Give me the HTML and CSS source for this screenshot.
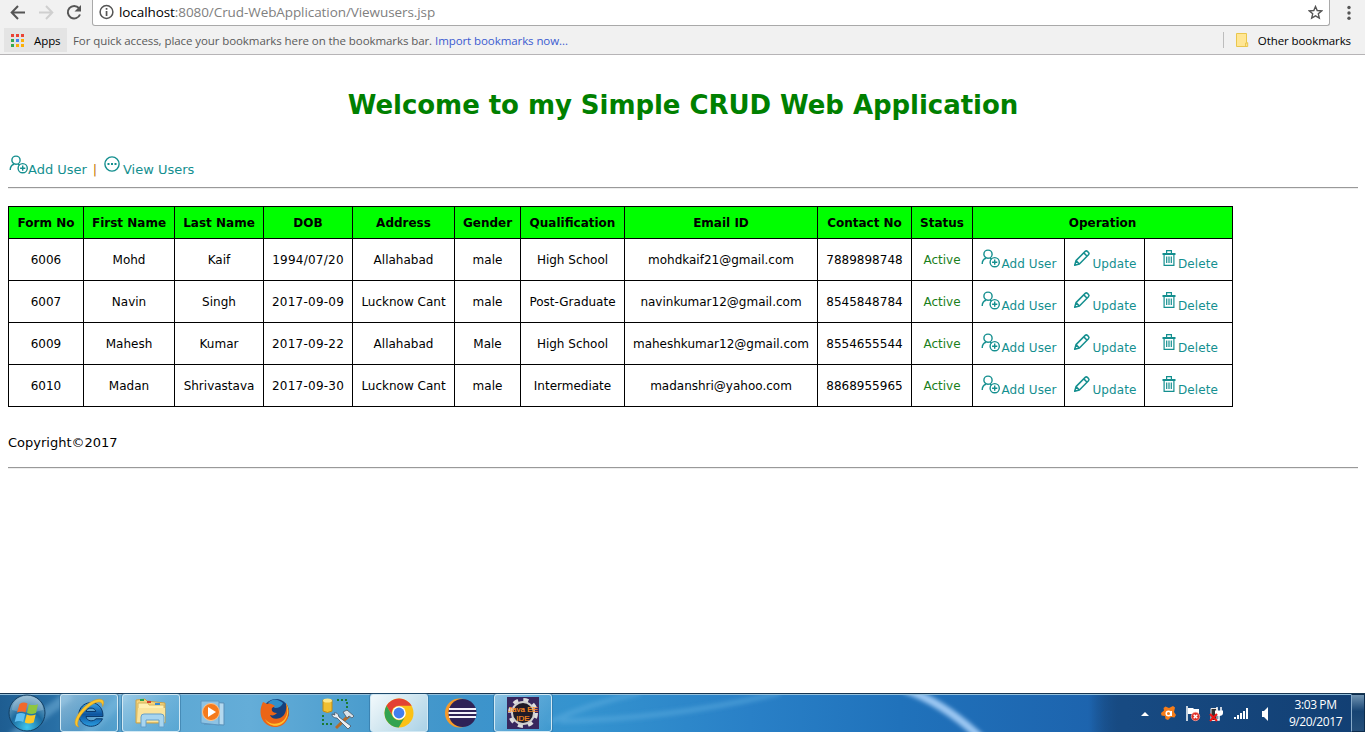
FILE: index.html
```html
<!DOCTYPE html>
<html lang="en">
<head>
<meta charset="utf-8">
<title>Viewusers.jsp</title>
<link rel="stylesheet" href="styles.css">
</head>
<body>
<svg class="defs" width="0" height="0" aria-hidden="true">
  <defs>
    <symbol id="add-user" viewBox="0 0 20 20">
      <g fill="none" stroke="#148f8f" stroke-width="1.4"><circle cx="7" cy="5.2" r="4.1"/><path d="M1.2 15C1.2 11.5 3 9.7 5.2 9.2M8.7 9.2l2 1"/><circle cx="13.7" cy="13.2" r="4.6"/><path d="M13.7 10.6v5.2M11.1 13.2h5.2"/></g>
    </symbol>
    <symbol id="pencil" viewBox="0 0 18 18">
      <g fill="none" stroke="#148f8f" stroke-width="1.5" stroke-linejoin="round"><path d="M1.7 16.3L3 11.6 12.2 2.4a1.6 1.6 0 0 1 2.2 0l1.1 1.1a1.6 1.6 0 0 1 0 2.2L6.4 15zM3 11.6L6.4 15M10.8 3.9l3.300 3.300"/></g>
    </symbol>
    <symbol id="trash" viewBox="0 0 14 17">
      <path fill="#148f8f" d="M4 0h6v3h3.500v2H.5V3H4zM5.200 1.200V3h3.600V1.200z" fill-rule="evenodd"/><path fill="none" stroke="#148f8f" stroke-width="1.2" d="M2.100 4.500v10.800h9.800V4.500M4.700 6.500v6.500M7 6.500v6.500M9.300 6.500v6.500"/>
    </symbol>
  </defs>
</svg>

<header class="browser">
  <div class="toolbar">
    <svg class="nav" width="92" height="26" viewBox="0 0 92 26"><g fill="none" stroke-width="2"><path stroke="#555" d="M25 12.5H12M18 6l-6.3 6.5L18 19"/><path stroke="#cfcfcf" d="M39 12.5h13M46 6l6.3 6.5L46 19"/><path stroke="#555" d="M79 8.2A6.3 6.3 0 1 0 80 14.5"/></g><path fill="#555" d="M81 5v6.5h-6.5z"/></svg>
    <div class="address">
      <svg width="15" height="16" viewBox="0 0 15 16"><circle cx="7.5" cy="8" r="6.4" fill="none" stroke="#555" stroke-width="1.5"/><path fill="#555" d="M6.7 4h1.7v1.8H6.7zM6.7 7h1.7v5H6.7z"/></svg>
      <span class="url"><b>localhost</b>:8080/Crud-WebApplication/Viewusers.jsp</span>
      <svg class="star" width="15" height="15" viewBox="0 0 15 15"><path fill="none" stroke="#555" stroke-width="1.4" d="M7.5 1.5l1.7 4 4.5.4-3.4 2.9 1 4.3-3.8-2.3-3.8 2.3 1-4.3L1.3 5.9l4.5-.4z"/></svg>
    </div>
    <svg class="dots" width="6" height="18" viewBox="0 0 6 18"><g fill="#555"><circle cx="3" cy="3.5" r="1.7"/><circle cx="3" cy="9" r="1.7"/><circle cx="3" cy="14.2" r="1.7"/></g></svg>
  </div>
  <div class="bookmarks">
    <div class="apps">
      <svg width="13" height="13" viewBox="0 0 13 13"><path fill="#ea4335" d="M0 0h3v3H0zM5 0h3v3H5zM10 0h3v3h-3z"/><path fill="#34a853" d="M0 5h3v3H0zM0 10h3v3H0z"/><path fill="#4285f4" d="M5 5h3v3H5z"/><path fill="#fbaf05" d="M10 5h3v3h-3zM5 10h3v3H5zM10 10h3v3h-3z"/></svg>
      <span>Apps</span>
    </div>
    <span class="hint">For quick access, place your bookmarks here on the bookmarks bar.</span>
    <a class="import">Import bookmarks now...</a>
    <div class="other">
      <svg width="13" height="14" viewBox="0 0 13 14"><path fill="#ffe694" stroke="#e9c64d" d="M.5.5h10v9.2h1.2v3.8H.5zM9.6 13.3V10h1.4"/></svg>
      <span>Other bookmarks</span>
    </div>
  </div>
</header>

<main class="page">
  <h1>Welcome to my Simple CRUD Web Application</h1>
  <nav class="links">
    <a><svg class="ic-add" width="20" height="20"><use href="#add-user"/></svg><span>Add User</span></a>
    <i class="bar">|</i>
    <a><svg class="ic-view" width="16" height="16" viewBox="0 0 16 16"><circle cx="8" cy="8" r="7.1" fill="none" stroke="#148f8f" stroke-width="1.4"/><path fill="#148f8f" d="M3.5 7h2v2h-2zM7 7h2v2H7zM10.5 7h2v2h-2z"/></svg><span>View Users</span></a>
  </nav>
  <hr class="rule">
  <table class="users">
    <colgroup><col class="c75"><col class="c91"><col class="c89"><col class="c89"><col class="c102"><col class="c66"><col class="c104"><col class="c193"><col class="c94"><col class="c61"><col class="c92"><col class="c80"><col class="c88"></colgroup>
    <thead><tr><th>Form No</th><th>First Name</th><th>Last Name</th><th>DOB</th><th>Address</th><th>Gender</th><th>Qualification</th><th>Email ID</th><th>Contact No</th><th>Status</th><th colspan="3">Operation</th></tr></thead>
    <tbody>
      <tr><td>6006</td><td>Mohd</td><td>Kaif</td><td class="dob">1994/07/20</td><td>Allahabad</td><td>male</td><td>High School</td><td>mohdkaif21@gmail.com</td><td>7889898748</td><td class="active">Active</td><td><a class="op"><svg class="ic-add" width="20" height="20"><use href="#add-user"/></svg><span>Add User</span></a></td><td><a class="op"><svg class="ic-pencil" width="18" height="18"><use href="#pencil"/></svg><span>Update</span></a></td><td><a class="op"><svg class="ic-trash" width="14" height="17"><use href="#trash"/></svg><span>Delete</span></a></td></tr>
      <tr><td>6007</td><td>Navin</td><td>Singh</td><td class="dob">2017-09-09</td><td>Lucknow Cant</td><td>male</td><td>Post-Graduate</td><td>navinkumar12@gmail.com</td><td>8545848784</td><td class="active">Active</td><td><a class="op"><svg class="ic-add" width="20" height="20"><use href="#add-user"/></svg><span>Add User</span></a></td><td><a class="op"><svg class="ic-pencil" width="18" height="18"><use href="#pencil"/></svg><span>Update</span></a></td><td><a class="op"><svg class="ic-trash" width="14" height="17"><use href="#trash"/></svg><span>Delete</span></a></td></tr>
      <tr><td>6009</td><td>Mahesh</td><td>Kumar</td><td class="dob">2017-09-22</td><td>Allahabad</td><td>Male</td><td>High School</td><td>maheshkumar12@gmail.com</td><td>8554655544</td><td class="active">Active</td><td><a class="op"><svg class="ic-add" width="20" height="20"><use href="#add-user"/></svg><span>Add User</span></a></td><td><a class="op"><svg class="ic-pencil" width="18" height="18"><use href="#pencil"/></svg><span>Update</span></a></td><td><a class="op"><svg class="ic-trash" width="14" height="17"><use href="#trash"/></svg><span>Delete</span></a></td></tr>
      <tr><td>6010</td><td>Madan</td><td>Shrivastava</td><td class="dob">2017-09-30</td><td>Lucknow Cant</td><td>male</td><td>Intermediate</td><td>madanshri@yahoo.com</td><td>8868955965</td><td class="active">Active</td><td><a class="op"><svg class="ic-add" width="20" height="20"><use href="#add-user"/></svg><span>Add User</span></a></td><td><a class="op"><svg class="ic-pencil" width="18" height="18"><use href="#pencil"/></svg><span>Update</span></a></td><td><a class="op"><svg class="ic-trash" width="14" height="17"><use href="#trash"/></svg><span>Delete</span></a></td></tr>
    </tbody>
  </table>
  <p class="copy">Copyright©2017</p>
  <hr class="rule">
</main>

<footer class="taskbar">
  <svg class="swoosh" width="1365" height="38" viewBox="0 0 1365 38">
    <defs>
      <filter id="soft" x="-20%" y="-50%" width="140%" height="200%"><feGaussianBlur stdDeviation="2"/></filter>
      <linearGradient id="tray" x1="0" x2="1"><stop offset="0" stop-color="#174a82" stop-opacity="0"/><stop offset=".14" stop-color="#174a82"/><stop offset="1" stop-color="#123f73"/></linearGradient>
    </defs>
    <g fill="none" filter="url(#soft)"><path d="M904-6Q945 8 984 46" stroke="#9cc8f3" stroke-width="8"/><path d="M550 27Q590 8 640-2M560 26Q670 24 780-2" stroke="#5fb0e2" stroke-opacity=".5" stroke-width="5"/><path d="M85 40L125 0M12 42L70 0" stroke="#8ac3e5" stroke-opacity=".4" stroke-width="10"/></g>
    <rect x="1088" width="277" height="39" fill="url(#tray)"/>
  </svg>
  <div class="tasks">
    <div class="slot start">
      <svg width="40" height="38" viewBox="0 0 40 38"><defs><radialGradient id="orb" cx=".5" cy=".9" r=".9"><stop offset="0" stop-color="#3fc8f0"/><stop offset=".5" stop-color="#1c6a9e"/><stop offset="1" stop-color="#8db6cf"/></radialGradient></defs><circle cx="19" cy="19" r="18" fill="url(#orb)" stroke="#123e63"/><path d="M4 16a15.500 14 0 0 1 31 0q-16 5-31 0" fill="#fff" opacity=".2"/><path fill="#f2692a" d="M11.500 10q4-2.500 8-.5L17.500 18.500q-4-2-8.500 0z"/><path fill="#8ec63f" d="M21 10.200q4 1.800 9 0L28 19q-4.500 2-9 0z"/><path fill="#5fbff2" d="M8.700 20q4.300-2 8.500 0l-2 8q-4-2-8.500 0z"/><path fill="#fdc829" d="M18.700 20.500q4 2 9 0l-2 8q-4.500 2-9 0z"/></svg>
    </div>
    <div class="slot open">
      <svg width="38" height="34" viewBox="0 0 38 34"><defs><linearGradient id="ieb" x2="0" y2="1"><stop stop-color="#3ba6e8"/><stop offset=".5" stop-color="#0f559f"/><stop offset="1" stop-color="#2a9de0"/></linearGradient></defs><path d="M33 20.500H16c.5 5 7.500 5.500 10 2.300h6.500C27 35 8.500 31.500 8.800 18 10 2.500 33.500 2.500 33 20.500zM16 15.500h9.800c-.6-4.500-9-4.500-9.800 0z" fill="url(#ieb)" stroke="#0b3a6c"/><path d="M9 31C-2 30 12 7 27 3.500c7-1.500 8 2.500 5.500 7C33 5 28 5 23 8 13 14 4 27 9 31z" fill="#fcc62c" stroke="#d69515" stroke-width=".5"/></svg>
    </div>
    <div class="slot open">
      <svg width="36" height="34" viewBox="0 0 36 34"><path d="M3 4l9-1 2 2 18 2v20H3z" fill="#f5d47c" stroke="#c8a24b"/><path d="M5 7h10l1 2h15v16H5z" fill="#fff0b3" stroke="#d3b45f"/><path d="M5 12h27v14H4z" fill="#fae49d"/><path fill="#27a44a" d="M7 3h4v2H7z"/><path fill="#d23f2b" d="M14 5h4v2h-4z"/><path fill="#348ad5" d="M22 7h5v2h-5z"/><path d="M8 31V21q0-3 3-3h17q3 0 3 3v10h-5v-7H13v7z" fill="#a8d5ef" stroke="#659fca"/></svg>
    </div>
    <div class="slot">
      <svg width="32" height="30" viewBox="0 0 32 30"><path d="M7 4l20 1v22l-20-1z" fill="#b4d9ef" stroke="#588fb8"/><path d="M4 3h18v24l-18-2z" fill="#8ec3e4" stroke="#5b97c2"/><circle cx="14" cy="14" r="8.500" fill="#f57a1b" stroke="#ffc48a"/><path d="M11 9v10l8-5z" fill="#fff"/></svg>
    </div>
    <div class="slot">
      <svg width="32" height="32" viewBox="0 0 32 32"><circle cx="17" cy="15" r="13" fill="#173f7b"/><path d="M9 6q6-7 15 0-2 5-8 5z" fill="#2e8fca"/><path d="M4 5c-3 6-4 13 1 20 7 8 19 6 23-2 3-6 2-12-1-17 1 7-1 13-6 15-5 2-9 0-10-3 3 1 5 0 7-2-4 0-6-2-5-5l3-2c-3-2-5-3-8-2-2-1-3-2-4-2z" fill="#ec6516"/><path d="M27 6c3 9 1 17-7 20-6 2-11 0-14-4 4 9 17 9 21 0 3-5 3-11 0-16z" fill="#ffc22d"/></svg>
    </div>
    <div class="slot">
      <svg width="34" height="34" viewBox="0 0 34 34"><path d="M3 4v11q4.500 3 9 0V4z" fill="#f1bf32" stroke="#c08b12"/><ellipse cx="7.500" cy="4.500" rx="4.500" ry="2" fill="#ffe789"/><path d="M17 4h10v11M3 19v9h9" fill="none" stroke="#1c7a31" stroke-width="2" stroke-dasharray="2 2"/><path d="M28 18l3 2-14 13-2-2z" fill="#b56a28"/><path d="M14 17q4-1 5 4l12 9-3 3-11-11q-5 0-5-4l3 1z" fill="#e9eef3" stroke="#425365" stroke-width=".8"/><path d="M23 16l4-2 7 6-2 2-3-2-2 2z" fill="#dce2e7" stroke="#46596b" stroke-width=".8"/></svg>
    </div>
    <div class="slot open current">
      <svg width="30" height="30" viewBox="0 0 30 30"><circle cx="15" cy="15" r="14.500" fill="#fbc116"/><path d="M2.500 7.700A14.500 14.500 0 0 1 27.600 7.700H15a7.200 7.200 0 0 0-6.200 10.900z" fill="#e34133"/><path d="M2.500 7.700A14.500 14.500 0 0 0 14.700 29.500L21.200 18.600a7.200 7.200 0 0 1-12.400 0z" fill="#32a350"/><circle cx="15" cy="15" r="6.800" fill="#fff"/><circle cx="15" cy="15" r="5.400" fill="#437fee"/></svg>
    </div>
    <div class="slot">
      <svg width="34" height="30" viewBox="0 0 34 30"><circle cx="15.500" cy="15" r="14.500" fill="#f79a28"/><circle cx="18.500" cy="15" r="14" fill="#2e2257"/><path d="M5 11h27M4.500 15h28M5 19h27" stroke="#f4f2fb" stroke-width="2.200"/></svg>
    </div>
    <div class="slot open">
      <svg class="jee-icon" width="32" height="32" viewBox="0 0 32 32"><path fill="#38275e" d="M0 0h32v32H0z"/><circle cx="16" cy="16" r="13" fill="none" stroke="#ddd" stroke-width="4" stroke-dasharray="5 5.200"/><circle cx="16" cy="16" r="11" fill="#201b27" stroke="#cfcfcf" stroke-width="2"/><text class="jee" x="16" y="15" text-anchor="middle">Java EE</text><text class="jee" x="16" y="23.500" text-anchor="middle">IDE</text></svg>
    </div>
  </div>
  <div class="tray">
    <svg width="132" height="20" viewBox="1138 703 132 20"><path fill="#fff" d="M1141 716l4-4 4 4z"/><path fill="#f57c19" d="M1163.500 708l2-1.500 3.500 1.500 4-2 2 1.500-1 4.500 2 3-1.500 2.500-3.500-.5-3 3-2.500-1-.5-3-3.500-.5-.5-2.500 3-2.500z"/><circle cx="1168.500" cy="713.500" r="2.300" fill="none" stroke="#fff" stroke-width="1.500"/><path d="M1171.300 711v5" stroke="#fff" stroke-width="1.400"/><path d="M1187 706v15" stroke="#fff" stroke-width="1.500"/><path d="M1188 708h5l1 1h5v6h-5l-1-1h-5z" fill="#fff"/><circle cx="1195.500" cy="716.500" r="4.200" fill="#df3028" stroke="#ffaca5" stroke-width=".7"/><path d="M1193.700 714.700l3.600 3.600m0-3.600l-3.600 3.600" stroke="#fff" stroke-width="1.400"/><path d="M1211 708.500h6v12h-6z" fill="#333" stroke="#e8e8e8"/><path d="M1215 710.500h8v2.500q0 3-4 3t-4-3z" fill="#fff"/><path d="M1217 707v4M1221 707v4M1219 715v5h-3" fill="none" stroke="#fff" stroke-width="1.500"/><path d="M1210 714l7 7m0-7l-7 7" stroke="#f01414" stroke-width="2"/><path fill="#fff" d="M1234 717h2v2h-2zM1237 715h2v4h-2zM1240 713h2v6h-2zM1243 711h2v8h-2zM1246 708h2v11h-2zM1262 711h2l4-4v14l-4-4h-2z"/></svg>
    <div class="clock"><span>3:03 PM</span><span>9/20/2017</span></div>
    <div class="peek"></div>
  </div>
</footer>
</body>
</html>
```
FILE: styles.css
```css
* { box-sizing: border-box; }
body { margin: 0; height: 732px; display: flex; flex-direction: column; overflow: hidden; background: #fff; color: #000; font-family: "DejaVu Sans", Verdana, sans-serif; }
.defs { position: absolute; }
svg { flex: none; display: block; }

/* Browser chrome */
.browser { height: 55px; background: #f1f1f1; border-bottom: 1px solid #b6b4b6; font-family: "Open Sans", "Segoe UI", sans-serif; }
.toolbar { display: flex; height: 26px; }
.address { width: 1238px; height: 26px; background: #fff; border: 1px solid #a9a9a9; border-top: 0; border-radius: 0 0 3px 3px; display: flex; align-items: center; padding: 0 6px 1px 6px; }
.url { margin-left: 5px; font-size: 13.5px; color: #808080; white-space: nowrap; letter-spacing: -.08px; }
.url b { font-weight: 400; color: #000; }
.star { margin-left: auto; }
.dots { margin: 4px 0 0 16px; }
.bookmarks { display: flex; align-items: center; height: 28px; padding: 0 14px 0 4px; font-size: 11.5px; letter-spacing: -.08px; white-space: nowrap; }
.apps { display: flex; align-items: center; width: 63px; height: 24px; padding-left: 7px; gap: 10px; background: #e4e4e4; }
.hint { margin-left: 6px; color: #5a5a5a; width: 357px; }
.import { margin-left: 5px; color: #3b5bd0; }
.other { margin-left: auto; height: 16px; display: flex; align-items: center; gap: 9px; border-left: 1px solid #bdbdbd; padding-left: 12px; }

/* Page */
.page { flex: 1; padding: 0 7px 0 8px; }
h1 { margin: 32px 0 0; height: 36px; line-height: 36px; text-align: center; font-size: 26px; letter-spacing: -.05px; color: #008000; white-space: nowrap; }
.links { display: flex; height: 26px; margin-top: 31px; padding: 1px 0 0 1px; font-size: 13px; line-height: 16px; color: #148f8f; }
.links a { display: flex; }
.links span { margin-top: 7px; }
.links .ic-add { margin-right: -1px; }
.bar { width: 16px; margin-top: 7px; text-align: center; font-style: normal; color: #c57900; }
.links .ic-view { margin: 1px 3px 0 1px; }
.rule { margin: 7px 0 0; height: 2px; border: 0; border-top: 1px solid #999; border-bottom: 1px solid #eee; }
.users { margin-top: 17px; width: 1225px; table-layout: fixed; border-collapse: collapse; font-size: 12px; text-align: center; white-space: nowrap; }
.users th, .users td { border: 1px solid #000; padding: 0; height: 42px; }
.users th { height: 32px; background: #0f0; }
.c75 { width: 75px; } .c91 { width: 91px; } .c89 { width: 89px; } .c102 { width: 102px; } .c66 { width: 66px; } .c104 { width: 104px; } .c193 { width: 193px; } .c94 { width: 94px; } .c61 { width: 61px; } .c92 { width: 92px; } .c80 { width: 80px; } .c88 { width: 88px; }
.users .dob { letter-spacing: .25px; }
.users .active { color: #1b801b; }
.op { display: flex; justify-content: center; font-size: 12px; line-height: 16px; letter-spacing: .1px; color: #148f8f; height: 24px; padding-left: 1px; }
.op span { margin-top: 8px; }
.op .ic-add { margin-top: 1px; }
.ic-pencil { margin: 1px 1px 0 0; }
.ic-trash { margin: 2px 2px 0 2px; }
.copy { margin: 27px 0 0; font-size: 13px; line-height: 18px; }
.copy + .rule { margin-top: 15px; }

/* Taskbar */
.taskbar { position: relative; height: 39px; display: flex; justify-content: space-between; border-top: 1px solid #173651; box-shadow: inset 0 1px #94c0dc; background: linear-gradient(90deg, #1e5d91 0, #286fa5 55px, #5aa6d2 130px, #64add8 250px, #4a9ccd 370px, #3e94cb 470px, #3493cf 580px, #2980c7 750px, #2072bb 900px, #1d64ae 1090px, #174a82 1120px); }
.swoosh { position: absolute; left: 0; top: 1px; }
.tasks, .tray { position: relative; display: flex; align-items: center; }
.tasks { gap: 4px; padding-left: 0; }
.slot { width: 58px; height: 38px; display: flex; align-items: center; justify-content: center; }
.start { width: 56px; }
.open { border: 1px solid #d2e9f4; border-radius: 3px; background: linear-gradient(135deg, #c1e0f1a0, #86c1e370 50%, #4da2d060); box-shadow: 0 0 0 1px #28658f70; }
.current { background: linear-gradient(135deg, #f2f9fc, #cfe5ef 50%, #aad2e7); }
.jee-icon { overflow: visible; }
.jee { font: 8px "Liberation Sans", sans-serif; fill: #ff9020; stroke: #ff9020; stroke-width: .2px; }
.tray { color: #fff; font: 12px/17px "Open Sans", "Segoe UI", sans-serif; }
.clock { width: 72px; margin-left: 8px; padding: 0 0 1px 3px; display: flex; flex-direction: column; align-items: center; margin-right: 1px; letter-spacing: -.4px; }
.peek { width: 14px; height: 38px; border: 1px solid #0c2c4d; border-left-color: #87aac9; background: linear-gradient(#7093b1, #174473 45%, #254f7a); }
```
